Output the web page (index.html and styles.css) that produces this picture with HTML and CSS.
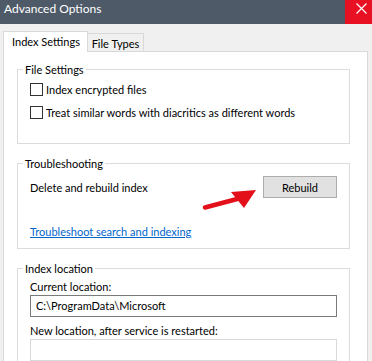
FILE: index.html
```html
<!DOCTYPE html>
<html lang="en">
<head>
    <meta charset="UTF-8">
    <title>Advanced Options</title>
    <link rel="stylesheet" href="styles.css">
</head>
<body>
    <div class="window">
        <div class="titlebar">
            <span class="title">Advanced Options</span>
            <span class="close-btn">
                <svg width="11" height="11" viewBox="0 0 11 11"><path d="M0.5 0.5 L10.5 10.5 M10.5 0.5 L0.5 10.5" stroke="#fff" stroke-width="1.2"/></svg>
            </span>
        </div>

        <div class="content">
            <div class="tabs">
                <div class="tab active">Index Settings</div>
                <div class="tab">File Types</div>
            </div>

            <div class="panel">
                <fieldset class="group group-files">
                    <legend>File Settings</legend>
                    <label class="check-row"><span class="checkbox"></span>Index encrypted files</label>
                    <label class="check-row"><span class="checkbox"></span>Treat similar words with diacritics as different words</label>
                </fieldset>

                <fieldset class="group group-trouble">
                    <legend>Troubleshooting</legend>
                    <div class="rebuild-row">
                        <span>Delete and rebuild index</span>
                        <button class="btn">Rebuild</button>
                        <!-- red annotation arrow pointing at the button -->
                        <svg class="arrow" width="60" height="28" viewBox="0 0 60 28">
                            <path d="M5 23.5 L39 14.5" stroke="#e3101a" stroke-width="4.5" stroke-linecap="round"/>
                            <path d="M56 6 L31 8 L44 24 Z" fill="#e3101a"/>
                        </svg>
                    </div>
                    <a class="link" href="#">Troubleshoot search and indexing</a>
                </fieldset>

                <fieldset class="group group-location">
                    <legend>Index location</legend>
                    <div class="field-label">Current location:</div>
                    <div class="textbox">C:\ProgramData\Microsoft</div>
                    <div class="field-label">New location, after service is restarted:</div>
                    <div class="textbox disabled"></div>
                </fieldset>
            </div>
        </div>
    </div>
</body>
</html>
```

FILE: styles.css
```css
body {
    margin: 0;
    background: #f0f0f0;
    font-family: Lato, "Liberation Sans", sans-serif;
    font-size: 11px;
    color: #000;
    overflow: hidden;
}
.window {
    width: 372px;
    height: 361px;
    overflow: hidden;
}
.titlebar {
    height: 24px;
    background: #4e5a68;
    display: flex;
    justify-content: space-between;
}
.title {
    color: #fff;
    font-size: 12px;
    padding: 0 0 0 4px;
    line-height: 17px;
}
.close-btn {
    width: 27px;
    background: #e81123;
    padding: 3px 0 0 11px;
    box-sizing: border-box;
}
.content {
    padding: 7px 4px 0 3px;
}
.tabs {
    display: flex;
    align-items: flex-end;
    height: 20px;
    position: relative;
    z-index: 1;
}
.tab {
    border: 1px solid #d9d9d9;
    border-bottom: none;
    background: #f0f0f0;
    width: 57px;
    height: 18px;
    line-height: 19px;
    text-align: center;
    box-sizing: border-box;
    margin-left: -1px;
}
.tab.active {
    background: #fff;
    width: 85px;
    height: 21px;
    margin-bottom: -1px;
    margin-left: 0;
    padding-left: 1px;
    line-height: 20px;
}
.panel {
    background: #fff;
    border: 1px solid #d9d9d9;
    padding: 10px 17px 0 13px;
    height: 320px;
}
.group {
    border: 1px solid #dcdcdc;
    margin: 0 0 12px 0;
    padding: 0 12px 0 12px;
}
.group legend {
    padding: 0 2px;
    margin-left: -7px;
    line-height: 15px;
}
.group-files {
    padding-top: 1px;
    padding-bottom: 19px;
}
.check-row {
    display: flex;
    align-items: center;
    height: 23px;
}
.checkbox {
    width: 11px;
    height: 11px;
    border: 1px solid #333;
    background: #fff;
    margin-right: 3px;
}
.group-trouble {
    padding-top: 5px;
    padding-bottom: 8px;
}
.rebuild-row {
    display: flex;
    justify-content: space-between;
    align-items: center;
    height: 22px;
    position: relative;
}
.btn {
    font-family: inherit;
    font-size: 11px;
    width: 74px;
    height: 22px;
    background: #e1e1e1;
    border: 1px solid #adadad;
    padding: 0;
    color: #000;
}
.arrow {
    position: absolute;
    left: 170px;
    top: 8px;
}
.link {
    display: block;
    margin-top: 25px;
    color: #0066cc;
    line-height: 17px;
}
.group-location {
    padding-top: 2px;
    margin-bottom: 0;
}
.field-label {
    line-height: 17px;
}
.textbox {
    height: 20px;
    border: 1px solid #7a7a7a;
    background: #fff;
    line-height: 20px;
    padding: 0 5px;
    margin-bottom: 5px;
}
.textbox.disabled {
    border-color: #d9d9d9;
}
```
